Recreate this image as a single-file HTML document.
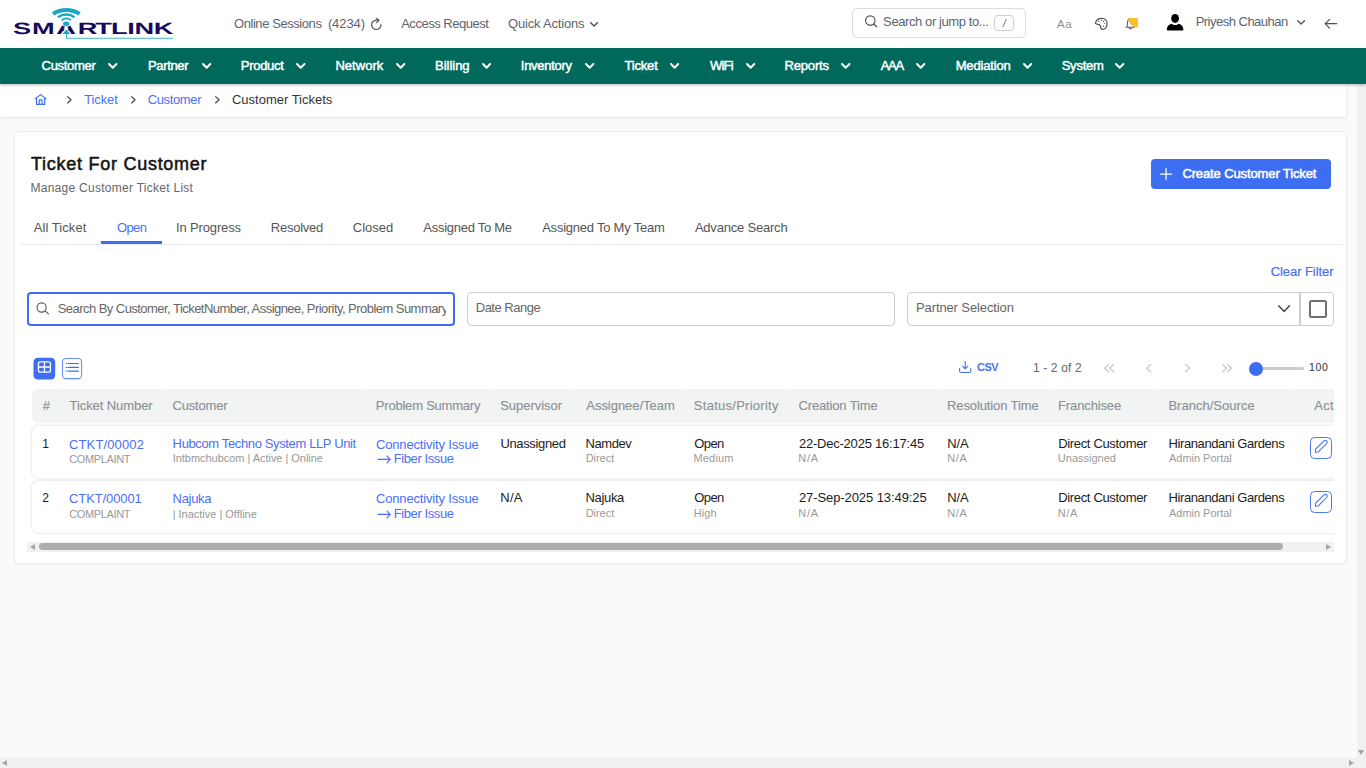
<!DOCTYPE html>
<html lang="en">
<head>
<meta charset="utf-8">
<title>Customer Tickets</title>
<style>
*{box-sizing:border-box;margin:0;padding:0}
html,body{width:1366px;height:768px;overflow:hidden}
body{background:#fafafa;font-family:"Liberation Sans",Arial,sans-serif;font-size:13px;color:#222;position:relative}
a{text-decoration:none;color:inherit}
ul{list-style:none}
.t{position:absolute;white-space:pre;display:block;font-weight:400}
svg{position:absolute;display:block;overflow:visible}
.abs{position:absolute}
header.top{position:absolute;left:0;top:0;width:1366px;height:48px;background:#fff;z-index:6}
nav.menu{position:absolute;left:0;top:48px;width:1366px;height:36px;background:#00695c;z-index:5;box-shadow:0 1px 3px rgba(0,0,0,.28)}
.crumbs{position:absolute;left:0;top:84px;width:1346px;height:33px;background:#fff;box-shadow:0 1px 3px rgba(0,0,0,.10)}
.searchbox{position:absolute;left:852px;top:8px;width:174px;height:30px;border:1px solid #d9dde4;border-radius:5px;background:#fff}
.kbd{position:absolute;left:141px;top:6px;width:20px;height:16px;border:1px solid #cfcfcf;border-radius:4px;background:#fff;font:inherit}

main.card{position:absolute;left:14px;top:131px;width:1333px;height:433px;background:#fff;border:1px solid #ececec;border-radius:6px;box-shadow:0 1px 2px rgba(0,0,0,.05)}
.btn-create{position:absolute;left:1136px;top:27px;width:180px;height:30px;background:#3d6ef2;border-radius:4px;border:0;padding:0;font:inherit;text-align:left}
.tabs{position:absolute;left:4.3px;top:80px;width:1323.5px;height:33px;border-bottom:1px solid #eeeeee}
.tabs .ink{position:absolute;left:82px;top:29px;width:60.8px;height:3px;background:#3d6ef2}
.inp{position:absolute;top:160px;height:34px;border:1px solid #c9cdd4;border-radius:4px;background:#fff}
.inp.focus{border:2px solid #3d6ef2}
.chk{position:absolute;width:17.6px;height:17.6px;border:2px solid #707070;border-radius:2.5px;background:#fff}
.vbtn{position:absolute;border-radius:4px}
.slider-track{position:absolute;height:3px;background:#cbcbcb;border-radius:2px}
.slider-thumb{position:absolute;left:1234px;top:229.6px;width:14px;height:14px;border-radius:50%;background:#3d6ef2}

.tablewrap{position:absolute;left:12px;top:254px;width:1307px;height:154px;overflow:hidden}
.thead{position:absolute;left:5px;top:3px;width:1400px;height:34.4px;background:#f2f3f3;border-radius:6px}
.thead i{position:absolute;top:0;width:1px;height:34.4px;background:#f6f7f7}
.trow{position:absolute;left:5px;width:1400px;height:52px;background:#fff;border-radius:7px;box-shadow:0 0 2px 1px rgba(0,0,0,.085)}
.ebtn{position:absolute;width:21.6px;height:21.6px;border:1.2px solid #4f78f3;border-radius:4.5px;background:#fff}
.hbar{position:absolute;left:12px;top:410.2px;width:1307px;height:9.6px;background:#f1f1f1}
.hbar b{position:absolute;left:12px;top:1.1px;width:1244px;height:6.8px;border-radius:3.4px;background:#adadad}
.sb-v{position:absolute;left:1357px;top:84px;width:9px;height:674px;background:#f1f1f1}
.sb-h{position:absolute;left:0;top:758px;width:1366px;height:10px;background:#f1f1f1}
.tri{position:absolute;width:0;height:0;border-style:solid}
</style>
</head>
<body>
<div class="crumbs">
<svg style="left:34px;top:9px" width="14" height="13" viewBox="34 93 14 13"><path d="M35.2 98.9 L40.6 94.6 L46 98.9 M36.5 98.2 V104.4 H44.7 V98.2 M39.2 104.4 V99.8 H42 V104.4" fill="none" stroke="#3d6ef2" stroke-width="1.15" stroke-linecap="round" stroke-linejoin="round"/></svg>
<svg style="left:66.60px;top:12.00px" width="4.70" height="7.60" viewBox="0 0 4.70 7.60"><path d="M0.60 0.60 L4.10 3.80 L0.60 7.00" fill="none" stroke="#4a4a4a" stroke-width="1.2" stroke-linecap="round" stroke-linejoin="round"/></svg>
<a id="t1" class="t" style="left:84.20px;top:8.20px;font-size:13px;line-height:15px;letter-spacing:-0.115px;color:#4a6ff5;">Ticket</a>
<svg style="left:130.80px;top:12.00px" width="4.70" height="7.60" viewBox="0 0 4.70 7.60"><path d="M0.60 0.60 L4.10 3.80 L0.60 7.00" fill="none" stroke="#4a4a4a" stroke-width="1.2" stroke-linecap="round" stroke-linejoin="round"/></svg>
<a id="t2" class="t" style="left:147.74px;top:8.20px;font-size:13px;line-height:15px;letter-spacing:-0.37px;color:#4a6ff5;">Customer</a>
<svg style="left:215.10px;top:12.00px" width="4.70" height="7.60" viewBox="0 0 4.70 7.60"><path d="M0.60 0.60 L4.10 3.80 L0.60 7.00" fill="none" stroke="#4a4a4a" stroke-width="1.2" stroke-linecap="round" stroke-linejoin="round"/></svg>
<span id="t3" class="t" style="left:231.97px;top:8.20px;font-size:13px;line-height:15px;letter-spacing:-0.007px;color:#333;">Customer Tickets</span>
</div>
<main class="card">
<h1 id="t4" class="t" style="left:16.05px;top:22.10px;font-size:18px;line-height:20px;letter-spacing:0.731px;color:#151515;-webkit-text-stroke:0.55px #151515;">Ticket For Customer</h1>
<p id="t5" class="t" style="left:15.46px;top:49.00px;font-size:12px;line-height:14px;letter-spacing:0.273px;color:#666;">Manage Customer Ticket List</p>
<button class="btn-create" type="button">
<svg style="left:8.9px;top:8.65px" width="12.2" height="12.2" viewBox="0 0 12.2 12.2"><path d="M6.1 0.6 V11.6 M0.6 6.1 H11.6" stroke="#fff" stroke-width="1.25" stroke-linecap="round"/></svg>
<span id="t6" class="t" style="left:31.40px;top:6.80px;font-size:13px;line-height:15px;letter-spacing:-0.117px;color:#fff;-webkit-text-stroke:0.5px #fff;">Create Customer Ticket</span>
</button>
<ul class="tabs">
<li id="t7" class="t" style="left:14.41px;top:8.00px;font-size:13px;line-height:15px;letter-spacing:0.063px;color:#555;">All Ticket</li>
<li id="t8" class="t" style="left:97.60px;top:8.00px;font-size:13px;line-height:15px;letter-spacing:-0.587px;color:#4a6ff5;">Open</li>
<li id="t9" class="t" style="left:156.70px;top:8.00px;font-size:13px;line-height:15px;letter-spacing:-0.145px;color:#555;">In Progress</li>
<li id="t10" class="t" style="left:251.43px;top:8.00px;font-size:13px;line-height:15px;letter-spacing:-0.226px;color:#555;">Resolved</li>
<li id="t11" class="t" style="left:333.57px;top:8.00px;font-size:13px;line-height:15px;letter-spacing:-0.014px;color:#555;">Closed</li>
<li id="t12" class="t" style="left:404.02px;top:8.00px;font-size:13px;line-height:15px;letter-spacing:-0.273px;color:#555;">Assigned To Me</li>
<li id="t13" class="t" style="left:522.88px;top:8.00px;font-size:13px;line-height:15px;letter-spacing:-0.229px;color:#555;">Assigned To My Team</li>
<li id="t14" class="t" style="left:675.58px;top:8.00px;font-size:13px;line-height:15px;letter-spacing:-0.204px;color:#555;">Advance Search</li>
<li class="ink"></li></ul>
<a id="t15" class="t" style="left:1255.65px;top:131.50px;font-size:13px;line-height:15px;letter-spacing:-0.063px;color:#4a6ff5;-webkit-text-stroke:0.2px #4a6ff5;">Clear Filter</a>
<div class="inp focus" style="left:12px;top:159.5px;width:428px;height:34.4px">
<svg style="left:7px;top:8.5px" width="14" height="13" viewBox="36 302 14 13"><circle cx="41.6" cy="307.5" r="4.6" fill="none" stroke="#555" stroke-width="1.1"/><path d="M45.1 310.9 L48.4 313.8" stroke="#555" stroke-width="1.1" stroke-linecap="round"/></svg>
<div class="abs" style="left:27px;top:2.5px;width:389.8px;height:26px;overflow:hidden"><span id="ph_search" class="t" style="left:1.68px;top:4.90px;font-size:13px;line-height:15px;letter-spacing:-0.544px;color:#666;">Search By Customer, TicketNumber, Assignee, Priority, Problem Summary</span></div>
</div>
<div class="inp" style="left:452px;top:159.5px;width:428px;height:34.4px">
<span id="t17" class="t" style="left:7.76px;top:7.80px;font-size:13px;line-height:15px;letter-spacing:-0.501px;color:#666;">Date Range</span>
</div>
<div class="inp" style="left:892px;top:159.5px;width:393px;height:34.4px;border-radius:4px 0 0 4px">
<span id="t18" class="t" style="left:8.01px;top:7.80px;font-size:13px;line-height:15px;letter-spacing:-0.113px;color:#666;">Partner Selection</span>
<svg style="left:370.00px;top:12.10px" width="12.20" height="7.20" viewBox="0 0 12.20 7.20"><path d="M0.70 0.70 L6.10 6.50 L11.50 0.70" fill="none" stroke="#444" stroke-width="1.4" stroke-linecap="round" stroke-linejoin="round"/></svg>
</div>
<div class="inp" style="left:1285px;top:159.5px;width:34px;height:34.4px;border-radius:0 4px 4px 0">
<span class="chk" style="left:8px;top:7.7px"></span>
</div>
<a class="vbtn on" style="left:18px;top:225px;width:23px;height:23px"><svg style="left:0;top:0" width="23" height="23" viewBox="33 357 23 23"><rect x="33.5" y="357.7" width="21.7" height="21.7" rx="4.2" fill="#3d6ef2"/><rect x="38.45" y="361.85" width="12" height="10.25" rx="1.9" fill="none" stroke="#fff" stroke-width="1.3"/><path d="M44.45 361.85 V372.1 M38.45 367.0 H50.45" stroke="#fff" stroke-width="1.3"/></svg></a>
<a class="vbtn" style="left:46px;top:225px;width:23px;height:23px"><svg style="left:0;top:0" width="23" height="23" viewBox="61 357 23 23"><rect x="62.5" y="358.4" width="19.1" height="20.2" rx="3.6" fill="#fff" stroke="#6a8cf5" stroke-width="1.05"/><path d="M68.4 363.5 H78.4 M68.4 367.4 H78.4 M68.4 371.1 H78.4" stroke="#3d6ef2" stroke-width="1.1" stroke-linecap="round"/><path d="M66.2 363.5 H66.9 M66.2 367.4 H66.9 M66.2 371.1 H66.9" stroke="#3d6ef2" stroke-width="1.2" stroke-linecap="round"/></svg></a>
<svg style="left:943px;top:228px" width="14" height="14" viewBox="958 360 14 14"><path d="M965.2 361.3 V368.4 M962.5 366.2 L965.2 368.8 L967.9 366.2 M959.6 368.4 V371.0 Q959.6 372.4 961 372.4 H969.4 Q970.8 372.4 970.8 371.0 V368.4" fill="none" stroke="#3d6ef2" stroke-width="1.05" stroke-linecap="round" stroke-linejoin="round"/></svg>
<a id="t19" class="t" style="left:962.03px;top:229.20px;font-size:11px;line-height:12px;letter-spacing:-0.527px;font-weight:700;color:#4a6ff5;">CSV</a>
<span id="t20" class="t" style="left:1017.94px;top:229.00px;font-size:12px;line-height:14px;letter-spacing:0.143px;color:#666;">1 - 2 of 2</span>
<svg style="left:1089.00px;top:232.30px" width="5.20" height="8.40" viewBox="0 0 5.20 8.40"><path d="M4.65 0.55 L0.55 4.20 L4.65 7.85" fill="none" stroke="#bdbdbd" stroke-width="1.1" stroke-linecap="round" stroke-linejoin="round"/></svg><svg style="left:1094.30px;top:232.30px" width="5.20" height="8.40" viewBox="0 0 5.20 8.40"><path d="M4.65 0.55 L0.55 4.20 L4.65 7.85" fill="none" stroke="#bdbdbd" stroke-width="1.1" stroke-linecap="round" stroke-linejoin="round"/></svg>
<svg style="left:1130.60px;top:232.30px" width="5.40" height="8.40" viewBox="0 0 5.40 8.40"><path d="M4.85 0.55 L0.55 4.20 L4.85 7.85" fill="none" stroke="#bdbdbd" stroke-width="1.1" stroke-linecap="round" stroke-linejoin="round"/></svg>
<svg style="left:1170.10px;top:232.30px" width="5.40" height="8.40" viewBox="0 0 5.40 8.40"><path d="M0.55 0.55 L4.85 4.20 L0.55 7.85" fill="none" stroke="#bdbdbd" stroke-width="1.1" stroke-linecap="round" stroke-linejoin="round"/></svg>
<svg style="left:1206.70px;top:232.30px" width="5.20" height="8.40" viewBox="0 0 5.20 8.40"><path d="M0.55 0.55 L4.65 4.20 L0.55 7.85" fill="none" stroke="#bdbdbd" stroke-width="1.1" stroke-linecap="round" stroke-linejoin="round"/></svg><svg style="left:1212.00px;top:232.30px" width="5.20" height="8.40" viewBox="0 0 5.20 8.40"><path d="M0.55 0.55 L4.65 4.20 L0.55 7.85" fill="none" stroke="#bdbdbd" stroke-width="1.1" stroke-linecap="round" stroke-linejoin="round"/></svg>
<div class="slider-track" style="left:1241px;top:235px;width:47.700000000000045px"></div>
<div class="slider-thumb" style="left:1234px;top:229.60000000000002px"></div>
<span id="t21" class="t" style="left:1293.96px;top:229.20px;font-size:10.5px;line-height:12px;letter-spacing:0.684px;color:#333;">100</span>
<div class="tablewrap" role="table" style="left:12px;top:254px">
<div class="thead" role="row" style="left:5px;top:3px">
<i style="left:27.5px"></i>
<i style="left:129.7px"></i>
<i style="left:334.5px"></i>
<i style="left:458.6px"></i>
<i style="left:543.3px"></i>
<i style="left:652.8px"></i>
<i style="left:756.4px"></i>
<i style="left:905.5px"></i>
<i style="left:1016.4px"></i>
<i style="left:1127.2px"></i>
<i style="left:1262.5px"></i>
<span id="t22" class="t" style="left:10.86px;top:9.20px;font-size:13px;line-height:15px;letter-spacing:0.0px;color:#8b9096;-webkit-text-stroke:0.12px #8b9096;">#</span>
<span id="t23" class="t" style="left:37.62px;top:9.20px;font-size:13px;line-height:15px;letter-spacing:-0.087px;color:#8b9096;-webkit-text-stroke:0.12px #8b9096;">Ticket Number</span>
<span id="t24" class="t" style="left:140.50px;top:9.20px;font-size:13px;line-height:15px;letter-spacing:-0.181px;color:#8b9096;-webkit-text-stroke:0.12px #8b9096;">Customer</span>
<span id="t25" class="t" style="left:343.85px;top:9.20px;font-size:13px;line-height:15px;letter-spacing:-0.216px;color:#8b9096;-webkit-text-stroke:0.12px #8b9096;">Problem Summary</span>
<span id="t26" class="t" style="left:468.15px;top:9.20px;font-size:13px;line-height:15px;letter-spacing:-0.02px;color:#8b9096;-webkit-text-stroke:0.12px #8b9096;">Supervisor</span>
<span id="t27" class="t" style="left:554.30px;top:9.20px;font-size:13px;line-height:15px;letter-spacing:-0.034px;color:#8b9096;-webkit-text-stroke:0.12px #8b9096;">Assignee/Team</span>
<span id="t28" class="t" style="left:661.85px;top:9.20px;font-size:13px;line-height:15px;letter-spacing:0.266px;color:#8b9096;-webkit-text-stroke:0.12px #8b9096;">Status/Priority</span>
<span id="t29" class="t" style="left:766.50px;top:9.20px;font-size:13px;line-height:15px;letter-spacing:-0.148px;color:#8b9096;-webkit-text-stroke:0.12px #8b9096;">Creation Time</span>
<span id="t30" class="t" style="left:914.99px;top:9.20px;font-size:13px;line-height:15px;letter-spacing:-0.111px;color:#8b9096;-webkit-text-stroke:0.12px #8b9096;">Resolution Time</span>
<span id="t31" class="t" style="left:1026.06px;top:9.20px;font-size:13px;line-height:15px;letter-spacing:-0.13px;color:#8b9096;-webkit-text-stroke:0.12px #8b9096;">Franchisee</span>
<span id="t32" class="t" style="left:1136.38px;top:9.20px;font-size:13px;line-height:15px;letter-spacing:0.022px;color:#8b9096;-webkit-text-stroke:0.12px #8b9096;">Branch/Source</span>
<span id="t33" class="t" style="left:1282.30px;top:9.20px;font-size:13px;line-height:15px;letter-spacing:0.312px;color:#8b9096;-webkit-text-stroke:0.12px #8b9096;">Action</span>
</div>
<div class="trow" role="row" style="top:40.0px">
<span id="t34" class="t" style="left:10.17px;top:11.00px;font-size:12px;line-height:14px;letter-spacing:0.0px;color:#1c1c1c;">1</span>
<a id="t35" class="t" style="left:37.02px;top:11.00px;font-size:13px;line-height:15px;letter-spacing:0.132px;color:#4a6ff5;">CTKT/00002</a>
<span id="t36" class="t" style="left:37.27px;top:27.00px;font-size:11px;line-height:12px;letter-spacing:-0.377px;color:#989898;">COMPLAINT</span>
<a id="t37" class="t" style="left:140.61px;top:10.00px;font-size:13px;line-height:15px;letter-spacing:-0.368px;color:#4a6ff5;">Hubcom Techno System LLP Unit</a>
<span id="t38" class="t" style="left:140.70px;top:26.00px;font-size:11px;line-height:12px;letter-spacing:-0.033px;color:#989898;">Intbmchubcom | Active | Online</span>
<a id="t39" class="t" style="left:344.02px;top:11.00px;font-size:13px;line-height:15px;letter-spacing:-0.164px;color:#4a6ff5;">Connectivity Issue</a>
<a id="arrow1" class="t" style="left:344.80px;top:22.70px;font-size:17px;line-height:20px;letter-spacing:0.0px;color:#4a6ff5;font-family:'Noto Sans CJK JP','DejaVu Sans',sans-serif;transform:scaleX(.85);transform-origin:0 50%;">→</a>
<a id="fiber1" class="t" style="left:361.80px;top:25.00px;font-size:13px;line-height:15px;letter-spacing:-0.411px;color:#4a6ff5;">Fiber Issue</a>
<span id="t42" class="t" style="left:468.44px;top:10.00px;font-size:13px;line-height:15px;letter-spacing:-0.354px;color:#1c1c1c;">Unassigned</span>
<span id="t43" class="t" style="left:553.46px;top:10.00px;font-size:13px;line-height:15px;letter-spacing:-0.41px;color:#1c1c1c;">Namdev</span>
<span id="t44" class="t" style="left:553.67px;top:26.00px;font-size:11px;line-height:12px;letter-spacing:-0.029px;color:#9a9a9a;">Direct</span>
<span id="t45" class="t" style="left:662.25px;top:10.00px;font-size:13px;line-height:15px;letter-spacing:-0.591px;color:#1c1c1c;">Open</span>
<span id="t46" class="t" style="left:661.48px;top:26.00px;font-size:11px;line-height:12px;letter-spacing:0.181px;color:#9a9a9a;">Medium</span>
<span id="t47" class="t" style="left:766.92px;top:10.00px;font-size:13px;line-height:15px;letter-spacing:-0.219px;color:#1c1c1c;">22-Dec-2025 16:17:45</span>
<span id="t48" class="t" style="left:766.25px;top:26.00px;font-size:11px;line-height:12px;letter-spacing:0.688px;color:#9a9a9a;">N/A</span>
<span id="t49" class="t" style="left:915.32px;top:10.00px;font-size:13px;line-height:15px;letter-spacing:-0.116px;color:#1c1c1c;">N/A</span>
<span id="t50" class="t" style="left:915.21px;top:26.00px;font-size:11px;line-height:12px;letter-spacing:0.653px;color:#9a9a9a;">N/A</span>
<span id="t51" class="t" style="left:1026.20px;top:10.00px;font-size:13px;line-height:15px;letter-spacing:-0.335px;color:#1c1c1c;">Direct Customer</span>
<span id="t52" class="t" style="left:1025.83px;top:26.00px;font-size:11px;line-height:12px;letter-spacing:0.006px;color:#9a9a9a;">Unassigned</span>
<span id="t53" class="t" style="left:1136.62px;top:10.00px;font-size:13px;line-height:15px;letter-spacing:-0.417px;color:#1c1c1c;">Hiranandani Gardens</span>
<span id="t54" class="t" style="left:1137.01px;top:26.00px;font-size:11px;line-height:12px;letter-spacing:-0.019px;color:#9a9a9a;">Admin Portal</span>
<a class="ebtn" style="left:1278.3px;top:11.1px"></a>
<svg style="left:1278.3px;top:11.1px" width="21.6" height="21.6" viewBox="0 0 21.6 21.6"><path d="M5.6 12.2 L14.0 3.8 Q15.4 2.6 16.7 3.8 Q17.9 5.1 16.7 6.5 L8.3 14.9 L5.4 15.3 Z" fill="none" stroke="#3d6ef2" stroke-width="1.05" stroke-linejoin="round"/></svg>
</div>
<div class="trow" role="row" style="top:95.0px">
<span id="t55" class="t" style="left:10.18px;top:10.00px;font-size:12px;line-height:14px;letter-spacing:0.0px;color:#1c1c1c;">2</span>
<a id="t56" class="t" style="left:37.02px;top:10.00px;font-size:13px;line-height:15px;letter-spacing:-0.106px;color:#4a6ff5;">CTKT/00001</a>
<span id="t57" class="t" style="left:37.27px;top:27.00px;font-size:11px;line-height:12px;letter-spacing:-0.377px;color:#989898;">COMPLAINT</span>
<a id="t58" class="t" style="left:140.61px;top:10.00px;font-size:13px;line-height:15px;letter-spacing:-0.324px;color:#4a6ff5;">Najuka</a>
<span id="t59" class="t" style="left:140.70px;top:27.00px;font-size:11px;line-height:12px;letter-spacing:-0.012px;color:#989898;">| Inactive | Offline</span>
<a id="t60" class="t" style="left:344.02px;top:10.00px;font-size:13px;line-height:15px;letter-spacing:-0.164px;color:#4a6ff5;">Connectivity Issue</a>
<a id="arrow2" class="t" style="left:344.80px;top:22.70px;font-size:17px;line-height:20px;letter-spacing:0.0px;color:#4a6ff5;font-family:'Noto Sans CJK JP','DejaVu Sans',sans-serif;transform:scaleX(.85);transform-origin:0 50%;">→</a>
<a id="fiber2" class="t" style="left:361.80px;top:25.00px;font-size:13px;line-height:15px;letter-spacing:-0.411px;color:#4a6ff5;">Fiber Issue</a>
<span id="t63" class="t" style="left:468.32px;top:9.00px;font-size:13px;line-height:15px;letter-spacing:0.179px;color:#1c1c1c;">N/A</span>
<span id="t64" class="t" style="left:553.46px;top:9.00px;font-size:13px;line-height:15px;letter-spacing:-0.314px;color:#1c1c1c;">Najuka</span>
<span id="t65" class="t" style="left:553.67px;top:26.00px;font-size:11px;line-height:12px;letter-spacing:-0.029px;color:#9a9a9a;">Direct</span>
<span id="t66" class="t" style="left:662.25px;top:9.00px;font-size:13px;line-height:15px;letter-spacing:-0.591px;color:#1c1c1c;">Open</span>
<span id="t67" class="t" style="left:661.83px;top:26.00px;font-size:11px;line-height:12px;letter-spacing:0.068px;color:#9a9a9a;">High</span>
<span id="t68" class="t" style="left:766.92px;top:9.00px;font-size:13px;line-height:15px;letter-spacing:-0.085px;color:#1c1c1c;">27-Sep-2025 13:49:25</span>
<span id="t69" class="t" style="left:766.25px;top:26.00px;font-size:11px;line-height:12px;letter-spacing:0.688px;color:#9a9a9a;">N/A</span>
<span id="t70" class="t" style="left:915.32px;top:9.00px;font-size:13px;line-height:15px;letter-spacing:-0.116px;color:#1c1c1c;">N/A</span>
<span id="t71" class="t" style="left:915.21px;top:26.00px;font-size:11px;line-height:12px;letter-spacing:0.653px;color:#9a9a9a;">N/A</span>
<span id="t72" class="t" style="left:1026.20px;top:9.00px;font-size:13px;line-height:15px;letter-spacing:-0.335px;color:#1c1c1c;">Direct Customer</span>
<span id="t73" class="t" style="left:1025.70px;top:26.00px;font-size:11px;line-height:12px;letter-spacing:0.653px;color:#9a9a9a;">N/A</span>
<span id="t74" class="t" style="left:1136.62px;top:9.00px;font-size:13px;line-height:15px;letter-spacing:-0.417px;color:#1c1c1c;">Hiranandani Gardens</span>
<span id="t75" class="t" style="left:1137.01px;top:26.00px;font-size:11px;line-height:12px;letter-spacing:-0.019px;color:#9a9a9a;">Admin Portal</span>
<a class="ebtn" style="left:1278.3px;top:10.4px"></a>
<svg style="left:1278.3px;top:10.4px" width="21.6" height="21.6" viewBox="0 0 21.6 21.6"><path d="M5.6 12.2 L14.0 3.8 Q15.4 2.6 16.7 3.8 Q17.9 5.1 16.7 6.5 L8.3 14.9 L5.4 15.3 Z" fill="none" stroke="#3d6ef2" stroke-width="1.05" stroke-linejoin="round"/></svg>
</div>
</div>
<div class="hbar" style="left:12px;top:410.20000000000005px"><span class="tri" style="left:2.6px;top:1.8px;border-width:3px 5px 3px 0;border-color:transparent #a6a6a6 transparent transparent"></span><b style="left:12px;width:1244px"></b><span class="tri" style="left:1299.3px;top:1.8px;border-width:3px 0 3px 5px;border-color:transparent transparent transparent #a6a6a6"></span></div>
</main>
<div class="sb-v"><span class="tri" style="left:1.2px;top:666px;border-width:5.4px 3.4px 0 3.4px;border-color:#a6a6a6 transparent transparent transparent"></span></div><div class="sb-h"><span class="tri" style="left:2.2px;top:2px;border-width:3px 5px 3px 0;border-color:transparent #a6a6a6 transparent transparent"></span><span class="tri" style="left:1349px;top:2px;border-width:3px 0 3px 5px;border-color:transparent transparent transparent #a6a6a6"></span></div>
<header class="top">

<a class="logo abs" style="left:0;top:0;width:200px;height:48px">
<svg style="left:0;top:0" width="200" height="48" viewBox="0 0 200 48">
  <g fill="none" stroke="#1ba5c2" stroke-linecap="butt">
    <path d="M53.0 13.9 A25 25 0 0 1 79.6 13.9" stroke-width="3.9"/>
    <path d="M58.1 17.2 A14 14 0 0 1 74.5 17.2" stroke-width="2.4"/>
    <path d="M61.6 20.3 A7.7 7.7 0 0 1 71.0 20.3" stroke-width="1.7"/>
  </g>
  <text text-rendering="geometricPrecision" transform="translate(0 34.1) scale(1.7 1.02)" x="7.62 18.81 33.07 45.77 56.05 65.30 74.83 79.20 90.38" y="0" font-family="Liberation Sans, Arial, sans-serif" font-weight="700" font-size="16" fill="#170a5c">SMARTLINK</text>
  <path d="M66.2 27.2 L71.6 34.6 L60.8 34.6 Z" fill="#fff"/>
  <ellipse cx="66.2" cy="23.6" rx="4.3" ry="3.3" fill="#fff"/>
  <ellipse cx="66.2" cy="23.8" rx="3.1" ry="2.2" fill="#1ba5c2"/>
  <path d="M66.3 29.4 L70.3 34.1 L62.4 34.1 Z" fill="#1ba5c2"/>
  <path d="M66.5 34 V38.3 H173" fill="none" stroke="#3fb4cf" stroke-width="1.1"/>
</svg>
</a>

<div class="links">
<a id="t76" class="t" style="left:233.96px;top:16.10px;font-size:13px;line-height:15px;letter-spacing:-0.429px;color:#5c6470;">Online Sessions</a>
<a id="t77" class="t" style="left:327.88px;top:16.10px;font-size:13px;line-height:15px;letter-spacing:-0.092px;color:#5c6470;">(4234)</a>
<svg style="left:370px;top:17px" width="14" height="14" viewBox="370 17 14 14"><path d="M381.0 24.7 A4.7 4.7 0 1 1 376.3 20.1 H378.6" fill="none" stroke="#4a515c" stroke-width="1.2" stroke-linecap="round"/><path d="M376.6 18.4 L378.9 20.3 L376.6 22.6" fill="none" stroke="#4a515c" stroke-width="1.2" stroke-linecap="round" stroke-linejoin="round"/></svg>
<a id="t78" class="t" style="left:401.18px;top:16.10px;font-size:13px;line-height:15px;letter-spacing:-0.475px;color:#5c6470;">Access Request</a>
<a id="t79" class="t" style="left:507.97px;top:16.10px;font-size:13px;line-height:15px;letter-spacing:-0.18px;color:#5c6470;">Quick Actions</a>
<svg style="left:589.80px;top:21.50px" width="8.10" height="4.80" viewBox="0 0 8.10 4.80"><path d="M0.70 0.70 L4.05 4.10 L7.40 0.70" fill="none" stroke="#4a515c" stroke-width="1.4" stroke-linecap="round" stroke-linejoin="round"/></svg>
</div>
<div class="searchbox">
<svg style="left:11px;top:5px" width="14" height="14" viewBox="864 14 14 14"><circle cx="870.3" cy="20.6" r="4.7" fill="none" stroke="#4a515c" stroke-width="1.2"/><path d="M873.8 24 L876.6 26.7" stroke="#4a515c" stroke-width="1.2" stroke-linecap="round"/></svg>
<span id="t80" class="t" style="left:30.12px;top:5.10px;font-size:13px;line-height:15px;letter-spacing:-0.404px;color:#5c6470;">Search or jump to...</span>
<kbd class="kbd"><span id="t81" class="t" style="left:7.90px;top:1.60px;font-size:10px;line-height:11px;letter-spacing:0.0px;color:#555;font-style:italic;">/</span></kbd>
</div>
<span id="t82" class="t" style="left:1057.05px;top:18.10px;font-size:11.5px;line-height:12px;letter-spacing:0.492px;color:#8f8f8f;">Aa</span>
<svg style="left:1094px;top:17px" width="15" height="14" viewBox="1094 17 15 14"><path d="M1101.6 18.4 C1105 18.4 1107.1 20.9 1107.1 23.9 C1107.1 27 1104.9 29.4 1102.4 29.4 C1100.9 29.4 1100.7 28.4 1100.7 27.3 C1100.7 25.8 1100.2 24.6 1098.4 24.3 L1096 23.8 C1095.4 23.6 1095.4 23 1095.6 22.5 C1096.5 20 1098.7 18.4 1101.6 18.4 Z" fill="none" stroke="#4a515c" stroke-width="1.2" stroke-linejoin="round"/><g fill="#4a515c"><circle cx="1098.9" cy="21.4" r="0.6"/><circle cx="1101.4" cy="20.4" r="0.6"/><circle cx="1103.6" cy="21.4" r="0.6"/><circle cx="1104.6" cy="23.5" r="0.6"/><circle cx="1103.5" cy="26.2" r="0.6"/></g></svg>
<svg style="left:1124px;top:17px" width="15" height="14" viewBox="1124 17 15 14"><path d="M1126 27.2 H1134.6 M1126.6 27 C1127.6 26 1127.4 24 1127.5 22.5 C1127.7 20.3 1128.8 18.8 1130.4 18.8 C1132 18.8 1133.2 20.3 1133.3 22.5 C1133.4 24 1133.2 26 1134.2 27 M1129 28.2 C1129.3 29.2 1131.5 29.2 1131.8 28.2" fill="none" stroke="#5a616c" stroke-width="1.1" stroke-linecap="round"/><path d="M1128.1 17.9 H1137.8 V27.5 A9.7 9.6 0 0 1 1128.1 17.9 Z" fill="#fbbf2d"/></svg>
<svg style="left:1165px;top:12px" width="20" height="20" viewBox="1165 12 20 20"><ellipse cx="1175.1" cy="18.4" rx="3.9" ry="4.5" fill="#000"/><path d="M1166.8 29.6 C1166.8 26.4 1168.8 24.6 1171.6 23.8 C1172.5 24.6 1173.7 25.1 1175.1 25.1 C1176.5 25.1 1177.7 24.6 1178.6 23.8 C1181.4 24.6 1183.4 26.4 1183.4 29.6 Q1183.4 30.6 1182.4 30.6 H1167.8 Q1166.8 30.6 1166.8 29.6 Z" fill="#000"/></svg>
<span id="t83" class="t" style="left:1195.65px;top:14.00px;font-size:13px;line-height:15px;letter-spacing:-0.511px;color:#5c6470;">Priyesh Chauhan</span>
<svg style="left:1296.80px;top:19.70px" width="8.20" height="4.70" viewBox="0 0 8.20 4.70"><path d="M0.70 0.70 L4.10 4.00 L7.50 0.70" fill="none" stroke="#4a515c" stroke-width="1.4" stroke-linecap="round" stroke-linejoin="round"/></svg>
<svg style="left:1324px;top:18px" width="14" height="12" viewBox="1324 18 14 12"><path d="M1336.6 23.7 H1325.4 M1329.6 19.3 L1325.2 23.7 L1329.6 28.1" fill="none" stroke="#4a515c" stroke-width="1.2" stroke-linecap="round" stroke-linejoin="round"/></svg>
</header>
<nav class="menu">
<a id="t84" class="t" style="left:41.59px;top:10.40px;font-size:13px;line-height:15px;letter-spacing:-0.306px;color:#fff;-webkit-text-stroke:0.45px #fff;">Customer</a>
<svg style="left:108.30px;top:14.80px" width="9.50" height="5.70" viewBox="0 0 9.50 5.70"><path d="M1.00 1.00 L4.75 4.70 L8.50 1.00" fill="none" stroke="#fff" stroke-width="2.0" stroke-linecap="round" stroke-linejoin="round"/></svg>
<a id="t85" class="t" style="left:147.92px;top:10.40px;font-size:13px;line-height:15px;letter-spacing:-0.325px;color:#fff;-webkit-text-stroke:0.45px #fff;">Partner</a>
<svg style="left:201.60px;top:14.80px" width="9.30" height="5.70" viewBox="0 0 9.30 5.70"><path d="M1.00 1.00 L4.65 4.70 L8.30 1.00" fill="none" stroke="#fff" stroke-width="2.0" stroke-linecap="round" stroke-linejoin="round"/></svg>
<a id="t86" class="t" style="left:240.84px;top:10.40px;font-size:13px;line-height:15px;letter-spacing:-0.31px;color:#fff;-webkit-text-stroke:0.45px #fff;">Product</a>
<svg style="left:296.10px;top:14.80px" width="9.50" height="5.70" viewBox="0 0 9.50 5.70"><path d="M1.00 1.00 L4.75 4.70 L8.50 1.00" fill="none" stroke="#fff" stroke-width="2.0" stroke-linecap="round" stroke-linejoin="round"/></svg>
<a id="t87" class="t" style="left:335.42px;top:10.40px;font-size:13px;line-height:15px;letter-spacing:0.039px;color:#fff;-webkit-text-stroke:0.45px #fff;">Network</a>
<svg style="left:395.60px;top:14.80px" width="9.40" height="5.70" viewBox="0 0 9.40 5.70"><path d="M1.00 1.00 L4.70 4.70 L8.40 1.00" fill="none" stroke="#fff" stroke-width="2.0" stroke-linecap="round" stroke-linejoin="round"/></svg>
<a id="t88" class="t" style="left:435.10px;top:10.40px;font-size:13px;line-height:15px;letter-spacing:-0.03px;color:#fff;-webkit-text-stroke:0.45px #fff;">Billing</a>
<svg style="left:481.50px;top:14.80px" width="9.10" height="5.70" viewBox="0 0 9.10 5.70"><path d="M1.00 1.00 L4.55 4.70 L8.10 1.00" fill="none" stroke="#fff" stroke-width="2.0" stroke-linecap="round" stroke-linejoin="round"/></svg>
<a id="t89" class="t" style="left:520.80px;top:10.40px;font-size:13px;line-height:15px;letter-spacing:-0.277px;color:#fff;-webkit-text-stroke:0.45px #fff;">Inventory</a>
<svg style="left:584.50px;top:14.80px" width="9.40" height="5.70" viewBox="0 0 9.40 5.70"><path d="M1.00 1.00 L4.70 4.70 L8.40 1.00" fill="none" stroke="#fff" stroke-width="2.0" stroke-linecap="round" stroke-linejoin="round"/></svg>
<a id="t90" class="t" style="left:624.56px;top:10.40px;font-size:13px;line-height:15px;letter-spacing:-0.199px;color:#fff;-webkit-text-stroke:0.45px #fff;">Ticket</a>
<svg style="left:669.90px;top:14.80px" width="9.20" height="5.70" viewBox="0 0 9.20 5.70"><path d="M1.00 1.00 L4.60 4.70 L8.20 1.00" fill="none" stroke="#fff" stroke-width="2.0" stroke-linecap="round" stroke-linejoin="round"/></svg>
<a id="t91" class="t" style="left:709.93px;top:10.40px;font-size:13px;line-height:15px;letter-spacing:-0.75px;color:#fff;-webkit-text-stroke:0.45px #fff;">WiFi</a>
<svg style="left:745.60px;top:14.80px" width="9.30" height="5.70" viewBox="0 0 9.30 5.70"><path d="M1.00 1.00 L4.65 4.70 L8.30 1.00" fill="none" stroke="#fff" stroke-width="2.0" stroke-linecap="round" stroke-linejoin="round"/></svg>
<a id="t92" class="t" style="left:784.52px;top:10.40px;font-size:13px;line-height:15px;letter-spacing:-0.169px;color:#fff;-webkit-text-stroke:0.45px #fff;">Reports</a>
<svg style="left:840.50px;top:14.80px" width="9.50" height="5.70" viewBox="0 0 9.50 5.70"><path d="M1.00 1.00 L4.75 4.70 L8.50 1.00" fill="none" stroke="#fff" stroke-width="2.0" stroke-linecap="round" stroke-linejoin="round"/></svg>
<a id="t93" class="t" style="left:880.72px;top:10.40px;font-size:13px;line-height:15px;letter-spacing:-1.288px;color:#fff;-webkit-text-stroke:0.45px #fff;">AAA</a>
<svg style="left:916.10px;top:14.80px" width="9.40" height="5.70" viewBox="0 0 9.40 5.70"><path d="M1.00 1.00 L4.70 4.70 L8.40 1.00" fill="none" stroke="#fff" stroke-width="2.0" stroke-linecap="round" stroke-linejoin="round"/></svg>
<a id="t94" class="t" style="left:955.64px;top:10.40px;font-size:13px;line-height:15px;letter-spacing:-0.147px;color:#fff;-webkit-text-stroke:0.45px #fff;">Mediation</a>
<svg style="left:1022.60px;top:14.80px" width="9.20" height="5.70" viewBox="0 0 9.20 5.70"><path d="M1.00 1.00 L4.60 4.70 L8.20 1.00" fill="none" stroke="#fff" stroke-width="2.0" stroke-linecap="round" stroke-linejoin="round"/></svg>
<a id="t95" class="t" style="left:1061.67px;top:10.40px;font-size:13px;line-height:15px;letter-spacing:-0.223px;color:#fff;-webkit-text-stroke:0.45px #fff;">System</a>
<svg style="left:1115.30px;top:14.80px" width="9.40" height="5.70" viewBox="0 0 9.40 5.70"><path d="M1.00 1.00 L4.70 4.70 L8.40 1.00" fill="none" stroke="#fff" stroke-width="2.0" stroke-linecap="round" stroke-linejoin="round"/></svg>
</nav>
</body>
</html>
